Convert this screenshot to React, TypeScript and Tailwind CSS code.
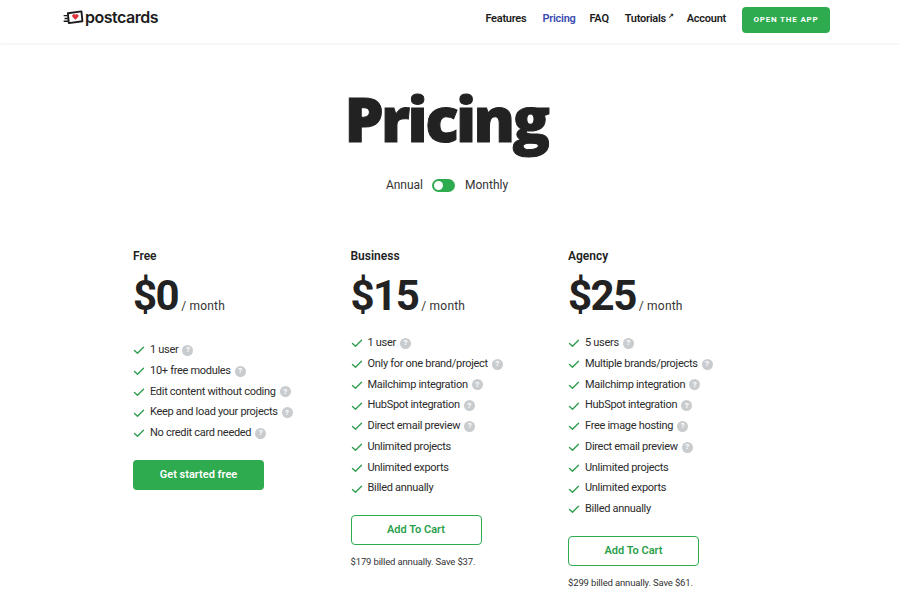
import React from "react";

const Check = () => (
  <svg viewBox="0 0 12 12" className="w-[12px] h-[12px] shrink-0" fill="none" stroke="#2f9e4f" strokeWidth="1.4" strokeLinecap="round" strokeLinejoin="round">
    <path d="M1.5 6.5 L4.5 9.2 L10.5 3.2" />
  </svg>
);
const Help = () => (
  <span className="ml-[4px] inline-flex w-[11px] h-[11px] rounded-full bg-[#c9cccf] text-white text-[8px] leading-none font-bold items-center justify-center shrink-0">?</span>
);
const Feature = ({ text, help = true }: { text: string; help?: boolean }) => (
  <li className="flex items-center h-[20.75px]">
    <Check />
    <span className="ml-[5px] text-[11px] text-[#2b2b2b] tracking-[-0.3px] whitespace-nowrap">{text}</span>
    {help && <Help />}
  </li>
);

type Plan = {
  name: string; price: string; features: [string, boolean][]; cta: string; solid?: boolean; note?: string; listTop: string;
};
const plans: Plan[] = [
  {
    name: "Free", price: "$0", solid: true, cta: "Get started free", listTop: "mt-[22px]",
    features: [["1 user", true], ["10+ free modules", true], ["Edit content without coding", true], ["Keep and load your projects", true], ["No credit card needed", true]],
  },
  {
    name: "Business", price: "$15", cta: "Add To Cart", note: "$179 billed annually. Save $37.", listTop: "mt-[15px]",
    features: [["1 user", true], ["Only for one brand/project", true], ["Mailchimp integration", true], ["HubSpot integration", true], ["Direct email preview", true], ["Unlimited projects", false], ["Unlimited exports", false], ["Billed annually", false]],
  },
  {
    name: "Agency", price: "$25", cta: "Add To Cart", note: "$299 billed annually. Save $61.", listTop: "mt-[15px]",
    features: [["5 users", true], ["Multiple brands/projects", true], ["Mailchimp integration", true], ["HubSpot integration", true], ["Free image hosting", true], ["Direct email preview", true], ["Unlimited projects", false], ["Unlimited exports", false], ["Billed annually", false]],
  },
];

export default function App() {
  return (
    <div className="w-[900px] h-[614px] overflow-hidden bg-white font-['Roboto',sans-serif] text-[#222]">
      <header className="h-[43px] flex items-center justify-between pl-[63px] pr-[70px] shadow-[0_1px_3px_rgba(0,0,0,0.07)]">
        <div className="flex items-center -mt-[9px]">
          <svg viewBox="0 0 22 16" className="w-[21px] h-[15px]" fill="none">
            <path d="M5 3.5 L19.5 1.5 L20.5 12 L6 14 Z" stroke="#1c1c1c" strokeWidth="2" strokeLinejoin="round" fill="white" />
            <path d="M0.5 6 H6 M1.5 9 H6 M0.5 12 H6" stroke="#1c1c1c" strokeWidth="1.5" />
            <path d="M13 10.5 L9.8 7.2 A1.8 1.8 0 0 1 13 5.4 A1.8 1.8 0 0 1 16.2 7.2 Z" fill="#e0303a" />
          </svg>
          <span className="ml-[1px] text-[16px] leading-none font-semibold tracking-[-0.5px] text-[#1c1c1c] font-['Inter',sans-serif]">postcards</span>
        </div>
        <nav className="flex items-center text-[11px] font-semibold text-[#1c1c1c] -mt-[3px]">
          <div className="flex items-center tracking-[-0.25px] -mt-[2px]">
            <a>Features</a>
            <a className="ml-[16px] text-[#3a4bb0]">Pricing</a>
            <a className="ml-[14px]">FAQ</a>
            <a className="ml-[16px]">Tutorials<span className="ml-[2px] text-[7px] align-top">↗</span></a>
            <a className="ml-[13px]">Account</a>
          </div>
          <a className="ml-[16px] w-[88px] h-[26px] rounded-[4px] bg-[#2eaa4f] text-white text-[8px] font-bold tracking-[0.8px] flex items-center justify-center">OPEN THE APP</a>
        </nav>
      </header>

      <section className="flex flex-col items-center mt-[36px]">
        <h1 className="-ml-[8px] text-[62px] leading-[78px] font-extrabold tracking-[-2.6px] text-[#222] [-webkit-text-stroke:1px_#222] font-['Open_Sans',sans-serif]">Pricing</h1>
        <div className="flex items-center mt-[19px] text-[12px] text-[#333] -ml-[6px]">
          <span>Annual</span>
          <span className="ml-[9px] w-[23px] h-[13px] rounded-full bg-[#2eaa4f] flex items-center pl-[2px]">
            <span className="w-[9px] h-[9px] rounded-full bg-white" />
          </span>
          <span className="ml-[10px]">Monthly</span>
        </div>
      </section>

      <section className="grid grid-cols-[217.5px_217.5px_217.5px] pl-[133px] mt-[54px]">
        {plans.map((p) => (
          <div key={p.name}>
            <div className="text-[12px] leading-[16px] font-semibold text-[#222]">{p.name}</div>
            <div className="flex items-baseline mt-[10px] h-[44px]">
              <span className="text-[42px] leading-[44px] font-bold tracking-[-1.5px] text-[#222]">{p.price}</span>
              <span className="ml-[3px] text-[12px] text-[#333] tracking-[0.2px]">/ month</span>
            </div>
            <ul className={p.listTop}>
              {p.features.map(([t, h]) => <Feature key={t} text={t} help={h} />)}
            </ul>
            <div className={p.solid
              ? "mt-[16px] w-[131px] h-[30px] rounded-[4px] bg-[#2eaa4f] text-white text-[11px] font-semibold flex items-center justify-center"
              : "mt-[16px] w-[131px] h-[30px] rounded-[4px] border border-[#2eaa4f] text-[#2c9f4b] text-[11px] font-semibold flex items-center justify-center"}>{p.cta}</div>
            {p.note && <div className="mt-[10px] text-[9.5px] leading-[14px] tracking-[-0.15px] text-[#333]">{p.note}</div>}
          </div>
        ))}
      </section>
    </div>
  );
}
